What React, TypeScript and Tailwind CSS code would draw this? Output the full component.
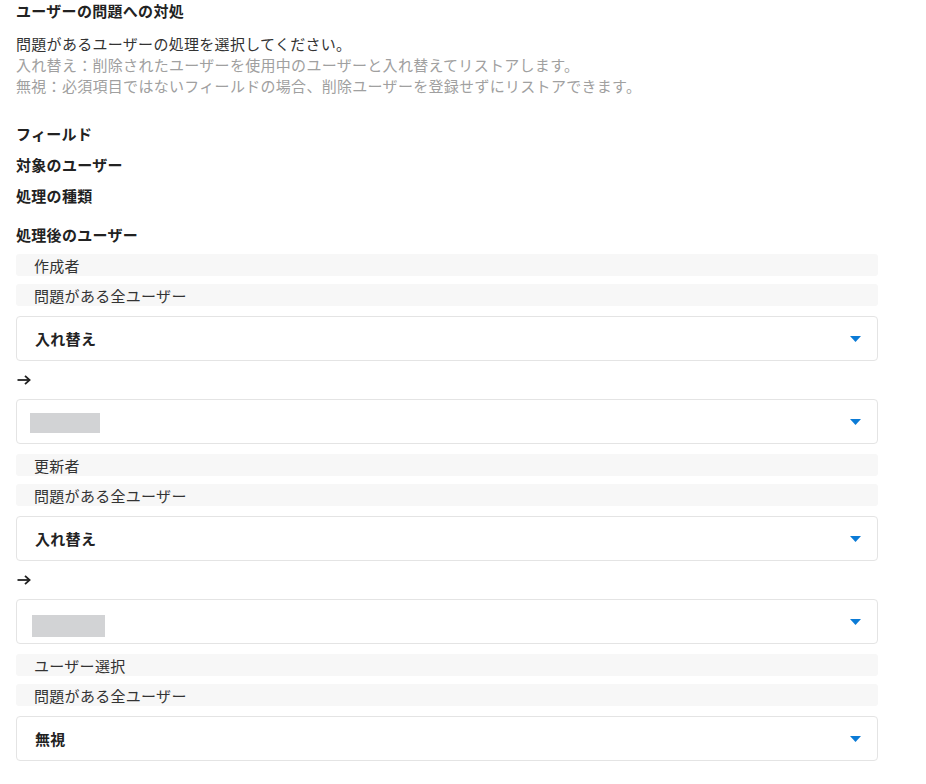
const FONT = '"Noto Sans CJK JP", "Noto Sans", sans-serif';

type Group = {
  field: string;
  target: string;
  action: string;
  // replacement user placeholder, only when action is 入れ替え
  placeholder?: { left: number; top: number; width: number; height: number };
};

const groups: Group[] = [
  { field: "作成者", target: "問題がある全ユーザー", action: "入れ替え", placeholder: { left: 14, top: 14, width: 70, height: 20 } },
  { field: "更新者", target: "問題がある全ユーザー", action: "入れ替え", placeholder: { left: 16, top: 16, width: 73, height: 22 } },
  { field: "ユーザー選択", target: "問題がある全ユーザー", action: "無視" },
];

function Caret() {
  return (
    <svg width="11" height="6" viewBox="0 0 11 6" className="shrink-0">
      <path d="M0 0 H11 L5.5 6 Z" fill="#0b7bd6" />
    </svg>
  );
}

function Arrow() {
  return (
    <svg width="14" height="10" viewBox="0 0 14 10" fill="none" stroke="#222" strokeWidth="1.8">
      <path d="M0.5 5 H12.5" />
      <path d="M8 0.8 L12.6 5 L8 9.2" strokeLinejoin="miter" />
    </svg>
  );
}

function Cell({ children }: { children: React.ReactNode }) {
  return (
    <div className="flex h-[22px] items-center rounded-[3px] bg-[#f7f7f7] pl-[18px] text-[15px] leading-[21px] text-[#333]">
      {children}
    </div>
  );
}

function Select({ children }: { children: React.ReactNode }) {
  return (
    <div className="relative flex h-[45px] items-center justify-between rounded-[4px] border border-[#e4e4e4] bg-white pl-[18px] pr-[16px]">
      <div className="flex-1">{children}</div>
      <Caret />
    </div>
  );
}

export default function App() {
  return (
    <div
      className="min-h-[784px] w-[926px] bg-white pl-4 pr-12 tracking-[0.3px] text-[#333]"
      style={{ fontFamily: FONT }}
    >
      {/* 見出しと説明 */}
      <h2 className="text-[15px] leading-[21px] font-bold text-[#222]">ユーザーの問題への対処</h2>
      <div className="mt-3 text-[15px] leading-[21px]">
        <p className="text-[#333]">問題があるユーザーの処理を選択してください。</p>
        <p className="text-[#a0a0a0]">入れ替え：削除されたユーザーを使用中のユーザーと入れ替えてリストアします。</p>
        <p className="text-[#a0a0a0]">無視：必須項目ではないフィールドの場合、削除ユーザーを登録せずにリストアできます。</p>
      </div>

      {/* 列ラベル */}
      <div className="mt-[27px] flex flex-col gap-[10px] text-[15px] leading-[21px] font-bold text-[#222]">
        <div>フィールド</div>
        <div>対象のユーザー</div>
        <div>処理の種類</div>
        <div className="mt-[8px]">処理後のユーザー</div>
      </div>

      {/* 各フィールド */}
      <div className="mt-[9px]">
        {groups.map((g) => (
          <div key={g.field} className="pb-[10px]">
            <Cell>{g.field}</Cell>
            <div className="mt-[8px]">
              <Cell>{g.target}</Cell>
            </div>
            <div className="mt-[10px]">
              <Select>
                <span className="text-[15px] font-bold text-[#222]">{g.action}</span>
              </Select>
            </div>
            {g.placeholder && (
              <>
                <div className="flex h-[38px] items-center pl-[1px]">
                  <Arrow />
                </div>
                <div className="relative h-[45px] rounded-[4px] border border-[#e4e4e4] bg-white">
                  <div
                    className="absolute bg-[#d2d3d5]"
                    style={{
                      left: g.placeholder.left - 1,
                      top: g.placeholder.top - 1,
                      width: g.placeholder.width,
                      height: g.placeholder.height,
                    }}
                  />
                  <div className="absolute right-[16px] top-[19px]">
                    <Caret />
                  </div>
                </div>
              </>
            )}
          </div>
        ))}
      </div>
    </div>
  );
}
